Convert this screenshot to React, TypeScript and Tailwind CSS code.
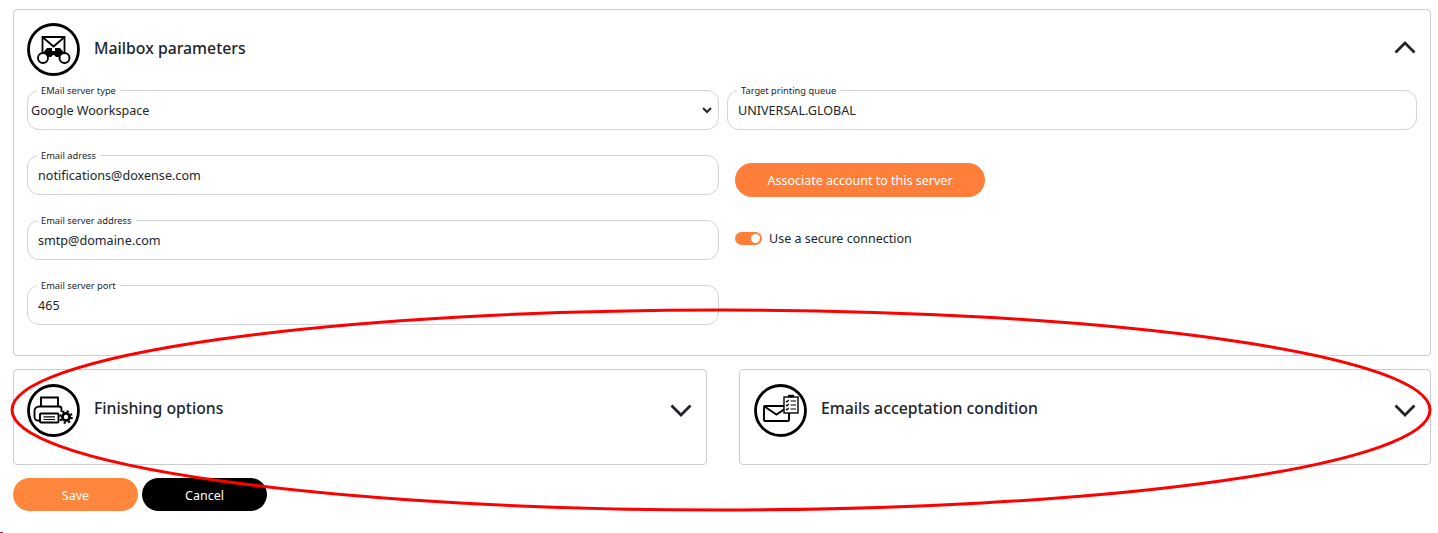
import React from 'react';

const font = { fontFamily: '"Noto Sans", "Open Sans", sans-serif' };

const IconRing: React.FC<{ children: React.ReactNode }> = ({ children }) => (
  <svg viewBox="0 0 53 53" className="w-[53px] h-[53px] flex-shrink-0" fill="none">
    <circle cx="26.5" cy="26.5" r="25" stroke="#000" strokeWidth="2.8" />
    {children}
  </svg>
);

const MailboxIcon = () => (
  <IconRing>
    <path d="M15.5 30V14h22v16" stroke="#000" strokeWidth="1.8" />
    <path d="M16 14.5l10.5 9 10.500-9" stroke="#000" strokeWidth="1.8" />
    <path d="M15 31l5-6h5v3h3v-3h5l5 6-4 3h-5l-2-2h-1l-2 2h-5z" fill="#000" />
    <circle cx="16" cy="35" r="5" fill="#fff" stroke="#000" strokeWidth="1.9" />
    <circle cx="37.5" cy="35" r="5" fill="#fff" stroke="#000" strokeWidth="1.9" />
  </IconRing>
);

const PrinterIcon = () => (
  <IconRing>
    <path d="M14 23v-9.500h17V23" stroke="#000" strokeWidth="1.900" />
    <path d="M13 36.500h-2a3.500 3.500 0 0 1-3.500-3.500v-6a4.500 4.500 0 0 1 4.500-4.500h20a2.500 2.500 0 0 1 2.500 2.500v3" stroke="#000" strokeWidth="1.900" />
    <rect x="13" y="29.500" width="18.500" height="9" rx="1" fill="#fff" stroke="#000" strokeWidth="1.900" />
    <path d="M16.500 32.800h11.500M16.500 35.500h11.500" stroke="#000" strokeWidth="1.200" />
    <circle cx="39" cy="33" r="3.600" fill="#fff" stroke="#000" strokeWidth="2.800" />
    <circle cx="39" cy="33" r="5.800" stroke="#000" strokeWidth="2" strokeDasharray="2.200 2.350" />
  </IconRing>
);

const MailListIcon = () => (
  <IconRing>
    <rect x="10" y="22" width="25" height="15" rx="1" stroke="#000" strokeWidth="1.900" />
    <path d="M10.500 22.500l12 8 12-8" stroke="#000" strokeWidth="1.900" />
    <rect x="30" y="13" width="14" height="16" fill="#fff" stroke="#000" strokeWidth="1.400" />
    <path d="M34 12h6" stroke="#000" strokeWidth="2.400" />
    <path d="M32 17l1 1 1.800-2M32 21l1 1 1.800-2M32 25l1 1 1.800-2" stroke="#000" strokeWidth="1.200" />
    <path d="M36.500 17h5.500M36.500 21h5.500M36.500 25h5.500" stroke="#000" strokeWidth="1.200" />
  </IconRing>
);

const Chevron: React.FC<{ up?: boolean }> = ({ up }) => (
  <svg viewBox="0 0 22 13" className="w-[22px] h-[13px]" fill="none">
    <path d={up ? 'M1.500 11.500L11 2l9.500 9.500' : 'M1.500 1.500L11 11l9.500-9.500'} stroke="#212529" strokeWidth="2.800" />
  </svg>
);

const Field: React.FC<{ label: string; children: React.ReactNode }> = ({ label, children }) => (
  <fieldset className="border border-[#ced4da] rounded-xl h-[45px] px-[3px]">
    <legend className="ml-[6px] px-[4px] text-[9.3px] leading-[10px] text-[#212529] translate-y-px">{label}</legend>
    {children}
  </fieldset>
);

const TextField: React.FC<{ label: string; value: string }> = ({ label, value }) => (
  <Field label={label}>
    <input
      readOnly
      value={value}
      className="w-full h-[31px] px-[7px] text-[12.6px] text-[#212529] outline-none bg-transparent"
    />
  </Field>
);

const Section: React.FC<{ icon: React.ReactNode; title: string; open?: boolean; children?: React.ReactNode; className?: string }> = ({
  icon,
  title,
  open,
  children,
  className,
}) => (
  <div className={`border border-[#ccc] rounded bg-white px-[13px] pt-[13px] ${className ?? ''}`}>
    <div className="flex items-center gap-[14px]">
      {icon}
      <h2 className={`flex-1 text-[15.8px] font-medium text-[#212529] ${open ? '-mt-[2px]' : '-mt-[4px]'}`}>{title}</h2>
      <div className={`mr-px ${open ? '-mt-[5px]' : '-mt-[1px]'}`}>
        <Chevron up={open} />
      </div>
    </div>
    {children}
  </div>
);

export default function App() {
  return (
    <div className="relative h-[533px] bg-white overflow-hidden pt-[9px] pl-[13px] pr-[7px]" style={font}>
      {/* Mailbox parameters */}
      <Section icon={<MailboxIcon />} title="Mailbox parameters" open className="pb-[30px] h-[347px]">
        <div className="grid grid-cols-[692px_1fr] gap-x-2 gap-y-5 mt-[9px]">
          <Field label="EMail server type">
            <select className="-ml-[4px] w-[calc(100%+4px)] h-[31px] text-[12.6px] text-[#212529] outline-none bg-transparent">
              <option>Google Woorkspace</option>
            </select>
          </Field>
          <TextField label="Target printing queue" value="UNIVERSAL.GLOBAL" />

          <TextField label="Email adress" value="notifications@doxense.com" />
          <div className="pl-2 pt-[13px] h-[45px]">
            <button className="w-[250px] h-[34px] pt-[2px] rounded-full bg-[#ff7f3a] text-white text-[12.5px]">
              Associate account to this server
            </button>
          </div>

          <TextField label="Email server address" value="smtp@domaine.com" />
          <div className="pl-2 pt-[13px] flex items-center gap-[7px] h-[33px]">
            <span className="w-[27px] h-[13px] rounded-full bg-[#ff7f3a] flex items-center justify-end pr-[2px]">
              <span className="w-[9px] h-[9px] rounded-full bg-white" />
            </span>
            <span className="pt-[2px] text-[12.5px] text-[#212529]">Use a secure connection</span>
          </div>

          <TextField label="Email server port" value="465" />
        </div>
      </Section>

      {/* Collapsed sections */}
      <div className="grid grid-cols-[694px_1fr] gap-8 mt-[13px]">
        <Section icon={<PrinterIcon />} title="Finishing options" className="h-[96px] pt-[14px]" />
        <Section icon={<MailListIcon />} title="Emails acceptation condition" className="h-[96px] pt-[14px] pl-[14px]" />
      </div>

      <div className="flex gap-1 mt-[13px]">
        <button className="w-[125px] h-[33px] pt-[3px] rounded-full bg-[#ff873d] text-white text-[12.5px]">Save</button>
        <button className="w-[125px] h-[33px] pt-[3px] rounded-full bg-black text-white text-[12.5px]">Cancel</button>
      </div>

      {/* Red annotation ellipse */}
      <svg className="absolute inset-0 w-full h-full pointer-events-none" viewBox="0 0 1438 533" fill="none">
        <ellipse cx="721" cy="410" rx="709" ry="100" stroke="#f00" strokeWidth="3" />
      </svg>

      {/* stray pixels left at the bottom edge of the capture */}
      <div className="absolute left-0 bottom-0 w-[3px] h-px bg-[#a0204a]" />
    </div>
  );
}
